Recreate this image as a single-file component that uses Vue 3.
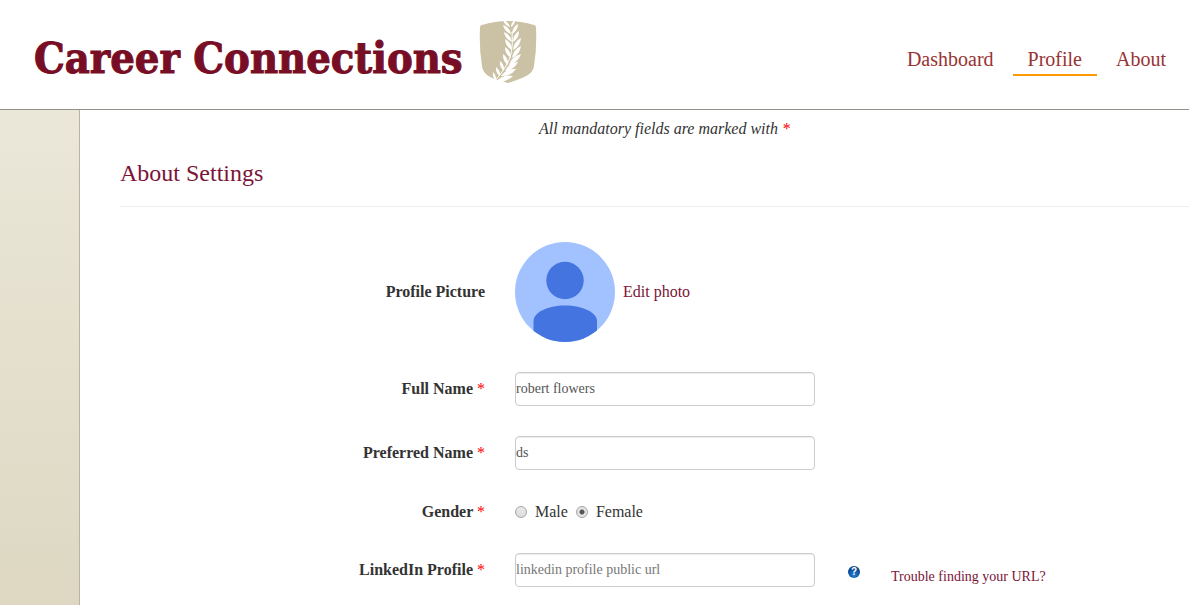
<script setup>
import { ref } from 'vue'

const fullName = ref('robert flowers')
const preferredName = ref('ds')
const gender = ref('female')
const linkedin = ref('')

// Leaf pairs along the wheat stem: [stem x, stem y, left tip x, y, right tip x, y]
const pairs = [
  [31, 7, 24, 0, 36, 0],
  [32, 14, 24, 5, 39, 4],
  [33, 22, 25, 12, 40, 11],
  [33, 30, 26, 19, 42, 18],
  [32, 38, 26, 27, 42, 26],
  [29, 45, 24, 34, 42, 34],
  [25, 51, 21, 41, 39, 42],
  [21, 56, 17, 47, 37, 49],
  [17, 61, 14, 52, 34, 56]
]

// A pointed leaf, widest near its middle, bowed to both sides of its axis
function leaf(bx, by, tx, ty) {
  const mx = (bx + tx) / 2
  const my = (by + ty) / 2
  const dx = (ty - by) * 0.28
  const dy = (bx - tx) * 0.28
  return `M${bx} ${by}Q${mx + dx} ${my + dy} ${tx} ${ty}Q${mx - dx} ${my - dy} ${bx} ${by}Z`
}
const leaves = pairs.map(([x, y, lx, ly, rx, ry]) => leaf(x, y, lx, ly) + leaf(x + 1, y, rx, ry)).join('')
</script>

<template>
  <div class="page">
    <header class="header">
      <a href="#" class="brand">
        <span class="brand-name">Career Connections</span>
        <svg class="shield" viewBox="0 0 58 64" aria-hidden="true">
          <path d="M3 5Q29 -3 55 5Q57 5 57 8Q58 28 55 46C54 55 44 58 29 63C14 59 4 56 3 46Q0 28 1 8Q1 5 3 5Z" fill="#cbc1a4" />
          <path d="M33 12Q35 34 27 46Q22 54 15 62M19 60L27 63" fill="none" stroke="#fff" stroke-width="1" />
          <path :d="leaves" fill="#fff" />
        </svg>
      </a>
      <nav class="nav">
        <a href="#">Dashboard</a>
        <a href="#" class="active">Profile</a>
        <a href="#">About</a>
      </nav>
    </header>

    <div class="body">
      <aside class="side"></aside>
      <main class="content">
        <p class="note">All mandatory fields are marked with <span class="req">*</span></p>
        <h1>About Settings</h1>

        <form class="form" @submit.prevent>
          <div class="row">
            <span class="label">Profile Picture</span>
            <div class="photo">
              <svg class="avatar" viewBox="0 0 100 100" role="img" aria-label="Avatar">
                <clipPath id="disc"><circle cx="50" cy="50" r="50" /></clipPath>
                <g clip-path="url(#disc)">
                  <rect width="100" height="100" fill="#a1c2fe" />
                  <circle cx="50" cy="38.500" r="18.700" fill="#4374e0" />
                  <path d="M18.500 100V79C18.500 71 32 63.500 50 63.500S82 71 82 79V100Z" fill="#4374e0" />
                </g>
              </svg>
              <a href="#">Edit photo</a>
            </div>
          </div>

          <div class="row">
            <label class="label" for="full">Full Name <span class="req">*</span></label>
            <input id="full" v-model="fullName" class="text" type="text" />
          </div>

          <div class="row">
            <label class="label" for="preferred">Preferred Name <span class="req">*</span></label>
            <input id="preferred" v-model="preferredName" class="text" type="text" />
          </div>

          <div class="row gender-row" role="radiogroup" aria-labelledby="gender">
            <span id="gender" class="label">Gender <span class="req">*</span></span>
            <div class="radios">
              <label><input v-model="gender" type="radio" name="gender" value="male" />Male</label>
              <label><input v-model="gender" type="radio" name="gender" value="female" />Female</label>
            </div>
          </div>

          <div class="row">
            <label class="label" for="linkedin">LinkedIn Profile <span class="req">*</span></label>
            <div class="linkedin">
              <input id="linkedin" v-model="linkedin" class="text" type="text" placeholder="linkedin profile public url" />
              <span class="help">?</span>
              <a href="#" class="trouble">Trouble finding your URL?</a>
            </div>
          </div>
        </form>
      </main>
    </div>
  </div>
</template>

<style>
body {
  margin: 0;
  background: #fff;
}
</style>

<style scoped>
.page {
  display: flex;
  flex-direction: column;
  height: 100vh;
  overflow: hidden;
  color: #333;
  font: 16px/20px "Liberation Serif", "Times New Roman", serif;
}
.page * {
  box-sizing: border-box;
}
a {
  color: #7b1437;
  text-decoration: none;
}
.header {
  display: flex;
  flex: none;
  justify-content: space-between;
  align-items: flex-start;
  padding: 20px 8px 23px 34px;
  border-bottom: 1px solid #94918a;
}
.brand {
  display: flex;
  align-items: flex-start;
  gap: 16px;
}
.brand-name {
  padding-top: 10px;
  color: #780e25;
  font-family: "DejaVu Serif Condensed", "DejaVu Serif", serif;
  font-size: 43px;
  font-weight: 700;
  line-height: 56px;
  white-space: nowrap;
  -webkit-text-stroke: 1px #780e25;
}
.shield {
  width: 58px;
  height: 64px;
}
.nav {
  display: flex;
  gap: 4px;
  padding-top: 28px;
}
.nav a {
  padding: 0 15px 4px;
  border-bottom: 2px solid transparent;
  color: #983334;
  font-size: 20px;
  line-height: 22px;
}
.nav .active {
  border-bottom-color: #f90;
}
.body {
  display: flex;
  flex: 1;
  min-height: 0;
}
.side {
  flex: none;
  width: 80px;
  border-right: 1px solid #b8b3a3;
  background: linear-gradient(#eae7d9, #ded8c2);
}
.content {
  flex: 1;
  min-width: 0;
  padding: 9px 0 0 40px;
}
.note {
  margin: 0;
  padding-left: 20px;
  font-style: italic;
  text-align: center;
}
.req {
  color: #f00;
  font-weight: 400;
}
h1 {
  margin: 20px 0 35px;
  padding-bottom: 18px;
  border-bottom: 1px solid #eee;
  color: #7b1437;
  font-size: 24px;
  font-weight: 400;
  line-height: 29px;
}
.form {
  display: flex;
  flex-direction: column;
  gap: 30px;
}
.row {
  display: grid;
  grid-template-columns: 365px 1fr;
  column-gap: 30px;
  align-items: center;
}
.label {
  font-weight: 700;
  text-align: right;
}
.photo {
  display: flex;
  align-items: center;
  gap: 8px;
}
.avatar {
  width: 100px;
  height: 100px;
}
.text {
  width: 300px;
  height: 34px;
  padding: 0;
  border: 1px solid #ccc;
  border-radius: 4px;
  background: #fff;
  box-shadow: inset 0 1px 1px rgba(0, 0, 0, 0.08);
  color: #555;
  font: inherit;
  font-size: 14px;
}
.text::placeholder {
  color: #777;
  opacity: 1;
}
.gender-row {
  height: 23px;
}
.radios {
  display: flex;
  gap: 8px;
}
.radios label {
  display: flex;
  align-items: center;
  gap: 8px;
}
.radios input {
  width: 12px;
  height: 12px;
  margin: 0;
  border: 1px solid #a5a5a5;
  border-radius: 50%;
  background: linear-gradient(#e9e9e9, #dcdcdc);
  appearance: none;
}
.radios input:checked {
  background: radial-gradient(circle, #555 0 2px, #e4e4e4 3px);
}
.linkedin {
  display: flex;
  align-items: center;
}
.help {
  width: 12px;
  height: 12px;
  margin: 4px 31px 0 33px;
  border-radius: 50%;
  background: radial-gradient(circle at 50% 75%, #2482cf, #0a4592 65%, #0b3474);
  color: #fff;
  font: 700 10px/12px "Liberation Sans", Arial, sans-serif;
  text-align: center;
}
.trouble {
  margin-top: 14px;
  font-size: 14px;
}
</style>
